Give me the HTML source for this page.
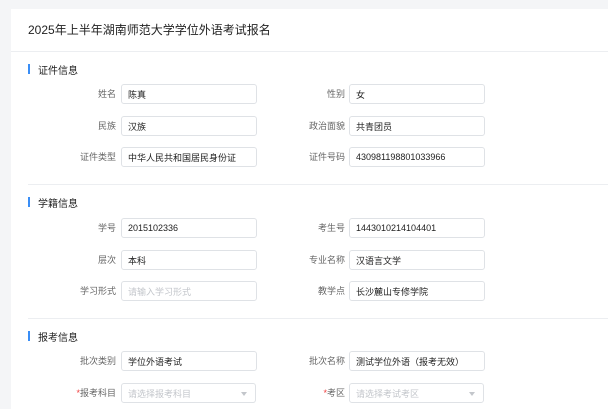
<!DOCTYPE html><html><head><meta charset="utf-8"><style>
*{margin:0;padding:0;box-sizing:border-box}
body{width:608px;height:401px;overflow:hidden;background:#f4f5f7;font-family:"Liberation Sans","Noto Sans CJK SC",sans-serif;position:relative}
.card{position:absolute;left:11px;top:9px;width:600px;height:400px;background:#fff}
.t{position:absolute;left:28px;top:21px;font-size:12px;color:#222}
.hl{position:absolute;left:11px;top:51px;width:597px;height:1px;background:#eceef1}
.dl{position:absolute;left:28px;width:580px;height:1px;background:#eceef1}
.sec{position:absolute;left:38px;font-size:10px;color:#222}
.bar{position:absolute;left:28px;width:2px;height:10px;background:#3a8ef6}
.lb{position:absolute;font-size:9px;color:#666;text-align:right;width:80px;height:20px;line-height:20px}
.in{position:absolute;height:20px;border:1px solid #dfe2e6;border-radius:3px;font-size:9px;color:#222;padding-left:6px;width:136px;display:flex;align-items:center}
.ph{color:#c3c6cb}
.r{color:#f04040}
.ar{position:absolute;right:8px;top:8px;width:0;height:0;border-left:3px solid transparent;border-right:3px solid transparent;border-top:4px solid #c3c6cb}
</style></head><body>
<div class="card"></div>
<div class="t">2025年上半年湖南师范大学学位外语考试报名</div>
<div class="hl"></div>
<div class="bar" style="top:64px"></div><div class="sec" style="top:62px">证件信息</div>
<div class="lb" style="left:36px;top:84px">姓名</div><div class="in" style="left:121px;top:84px">陈真</div>
<div class="lb" style="left:265px;top:84px">性别</div><div class="in" style="left:349px;top:84px">女</div>
<div class="lb" style="left:36px;top:116px">民族</div><div class="in" style="left:121px;top:116px">汉族</div>
<div class="lb" style="left:265px;top:116px">政治面貌</div><div class="in" style="left:349px;top:116px">共青团员</div>
<div class="lb" style="left:36px;top:147px">证件类型</div><div class="in" style="left:121px;top:147px">中华人民共和国居民身份证</div>
<div class="lb" style="left:265px;top:147px">证件号码</div><div class="in" style="left:349px;top:147px">430981198801033966</div>
<div class="dl" style="top:184px"></div>
<div class="bar" style="top:197px"></div><div class="sec" style="top:195px">学籍信息</div>
<div class="lb" style="left:36px;top:218px">学号</div><div class="in" style="left:121px;top:218px">2015102336</div>
<div class="lb" style="left:265px;top:218px">考生号</div><div class="in" style="left:349px;top:218px">1443010214104401</div>
<div class="lb" style="left:36px;top:250px">层次</div><div class="in" style="left:121px;top:250px">本科</div>
<div class="lb" style="left:265px;top:250px">专业名称</div><div class="in" style="left:349px;top:250px">汉语言文学</div>
<div class="lb" style="left:36px;top:281px">学习形式</div><div class="in ph" style="left:121px;top:281px">请输入学习形式</div>
<div class="lb" style="left:265px;top:281px">教学点</div><div class="in" style="left:349px;top:281px">长沙麓山专修学院</div>
<div class="dl" style="top:318px"></div>
<div class="bar" style="top:331px"></div><div class="sec" style="top:329px">报考信息</div>
<div class="lb" style="left:36px;top:351px">批次类别</div><div class="in" style="left:121px;top:351px">学位外语考试</div>
<div class="lb" style="left:265px;top:351px">批次名称</div><div class="in" style="left:349px;top:351px">测试学位外语（报考无效）</div>
<div class="lb" style="left:36px;top:383px"><span class="r">*</span>报考科目</div><div class="in ph" style="left:121px;top:383px;width:135px">请选择报考科目<span class="ar"></span></div>
<div class="lb" style="left:265px;top:383px"><span class="r">*</span>考区</div><div class="in ph" style="left:349px;top:383px;width:135px">请选择考试考区<span class="ar"></span></div>
</body></html>
